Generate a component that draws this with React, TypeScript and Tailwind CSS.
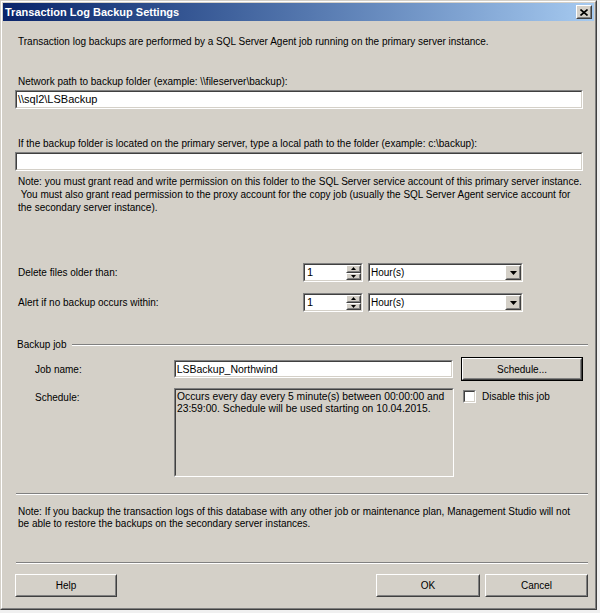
import React from "react";

const face = "bg-[#d4d0c8]";

function Sunken({ className = "", inner = "bg-white", children }: { className?: string; inner?: string; children?: React.ReactNode }) {
  return (
    <div className={`border border-t-[#808080] border-l-[#808080] border-b-white border-r-white ${className}`}>
      <div className={`h-full border border-t-[#404040] border-l-[#404040] border-b-[#d4d0c8] border-r-[#d4d0c8] ${inner}`}>
        {children}
      </div>
    </div>
  );
}

function Raised({ className = "", children }: { className?: string; children?: React.ReactNode }) {
  return (
    <div className={`border border-t-white border-l-white border-b-[#404040] border-r-[#404040] ${face} ${className}`}>
      <div className="h-full border border-t-[#d4d0c8] border-l-[#d4d0c8] border-b-[#808080] border-r-[#808080] flex items-center justify-center">
        {children}
      </div>
    </div>
  );
}

function Button({ label, width, isDefault = false }: { label: string; width: string; isDefault?: boolean }) {
  if (isDefault) {
    return (
      <div className={`border border-black ${width} h-full`}>
        <Raised className="h-full">{label}</Raised>
      </div>
    );
  }
  return <Raised className={`${width} h-full`}>{label}</Raised>;
}

function Triangle({ dir, size = 7 }: { dir: "up" | "down"; size?: number }) {
  const h = Math.ceil(size / 2);
  return (
    <svg width={size} height={h} viewBox={`0 0 ${size} ${h}`}>
      {dir === "down" ? (
        <polygon points={`0,0 ${size},0 ${size / 2},${h}`} fill="black" />
      ) : (
        <polygon points={`0,${h} ${size},${h} ${size / 2},0`} fill="black" />
      )}
    </svg>
  );
}

function Spin() {
  return (
    <Sunken className="w-[60px] h-[19px]">
      <div className="flex h-full">
        <span className="flex-1 pl-[2px] leading-[15px] text-[11px]">1</span>
        <div className="flex flex-col w-[15px] h-full">
          <Raised className="h-1/2">
            <Triangle dir="up" size={5} />
          </Raised>
          <Raised className="h-1/2">
            <Triangle dir="down" size={5} />
          </Raised>
        </div>
      </div>
    </Sunken>
  );
}

function Combo({ value }: { value: string }) {
  return (
    <Sunken className="w-[155px] h-[19px]">
      <div className="flex h-full">
        <span className="flex-1 pl-[1px] leading-[15px]">{value}</span>
        <Raised className="w-[16px] h-full">
          <Triangle dir="down" size={7} />
        </Raised>
      </div>
    </Sunken>
  );
}

function Etched({ className = "" }: { className?: string }) {
  return (
    <div className={`flex flex-col ${className}`}>
      <div className="h-px bg-[#808080]" />
      <div className="h-px bg-white" />
    </div>
  );
}

export default function App() {
  return (
    <div className="w-[600px] h-[613px] bg-[#f0f0f0] overflow-hidden [font-family:'Liberation_Sans',Arial,sans-serif] text-[10px] text-black">
      <div className="w-[597px] h-[610px] border border-t-[#d4d0c8] border-l-[#d4d0c8] border-b-[#404040] border-r-[#404040]">
        <div className={`h-full border border-t-white border-l-white border-b-[#808080] border-r-[#808080] ${face} p-px`}>
          {/* title bar */}
          <div className="h-[18px] flex items-center justify-between bg-gradient-to-r from-[#0a246a] to-[#a6caf0] pl-[2px] pr-[2px]">
            <span className="text-white font-bold text-[11px]">Transaction Log Backup Settings</span>
            <Raised className="w-[16px] h-[14px]">
              <svg width="8" height="7" viewBox="0 0 8 7">
                <path d="M0.5 0.5 L7.5 6.5 M7.5 0.5 L0.5 6.5" stroke="black" strokeWidth="1.6" />
              </svg>
            </Raised>
          </div>

          <div className="flex flex-col pl-[12px] pr-[11px] leading-[13px] whitespace-nowrap">
            <p className="mt-[14px] pl-[3px]">
              Transaction log backups are performed by a SQL Server Agent job running on the primary server instance.
            </p>

            <p className="mt-[27px] pl-[3px]">Network path to backup folder (example: \\fileserver\backup):</p>
            <Sunken className="mt-[2px] h-[19px]">
              <span className="block pl-[1px] leading-[15px] text-[11px]">\\sql2\LSBackup</span>
            </Sunken>

            <p className="mt-[28px] pl-[3px]">
              If the backup folder is located on the primary server, type a local path to the folder (example: c:\backup):
            </p>
            <Sunken className="mt-[2px] h-[19px]" />

            <p className="mt-[4px] pl-[3px]">
              Note: you must grant read and write permission on this folder to the SQL Server service account of this primary server instance.
              <br />
              &nbsp;You must also grant read permission to the proxy account for the copy job (usually the SQL Server Agent service account for
              <br />
              the secondary server instance).
            </p>

            <div className="mt-[49px] flex items-center h-[19px]">
              <span className="w-[288px] pl-[3px]">Delete files older than:</span>
              <Spin />
              <div className="ml-[5px]">
                <Combo value="Hour(s)" />
              </div>
            </div>

            <div className="mt-[11px] flex items-center h-[19px]">
              <span className="w-[288px] pl-[3px]">Alert if no backup occurs within:</span>
              <Spin />
              <div className="ml-[5px]">
                <Combo value="Hour(s)" />
              </div>
            </div>

            <div className="mt-[26px] flex items-center -mr-[5px] h-[13px]">
              <span className="pl-[2px]">Backup job</span>
              <Etched className="flex-1 ml-[6px]" />
            </div>

            <div className="mt-[6px] flex items-center h-[24px]">
              <span className="w-[159px] pl-[20px]">Job name:</span>
              <Sunken className="w-[280px] h-[18px]">
                <span className="block pl-[1px] leading-[14px] text-[10.5px]">LSBackup_Northwind</span>
              </Sunken>
              <div className="ml-[8px] h-full">
                <Button label="Schedule..." width="w-[122px]" isDefault />
              </div>
            </div>

            <div className="mt-[7px] flex items-start">
              <span className="w-[159px] pl-[20px] mt-[3px]">Schedule:</span>
              <Sunken className="w-[280px] h-[89px]" inner={face}>
                <p className="pl-[1px] pt-[1px] text-[10.3px] leading-[12px]">
                  Occurs every day every 5 minute(s) between 00:00:00 and
                  <br />
                  23:59:00. Schedule will be used starting on 10.04.2015.
                </p>
              </Sunken>
              <div className="ml-[9px] mt-[2px] flex items-center">
                <Sunken className="w-[13px] h-[13px]" />
                <span className="ml-[6px]">Disable this job</span>
              </div>
            </div>

            <Etched className="mt-[16px] ml-[1px] -mr-[5px]" />

            <p className="mt-[11px] pl-[3px] leading-[12px]">
              Note: If you backup the transaction logs of this database with any other job or maintenance plan, Management Studio will not
              <br />
              be able to restore the backups on the secondary server instances.
            </p>

            <Etched className="mt-[32px] ml-[1px] -mr-[5px]" />

            <div className="mt-[10px] flex h-[23px] -mr-[5px]">
              <Button label="Help" width="w-[102px]" />
              <div className="flex-1" />
              <Button label="OK" width="w-[104px]" />
              <div className="ml-[5px] h-full">
                <Button label="Cancel" width="w-[103px]" />
              </div>
            </div>
          </div>
        </div>
      </div>
    </div>
  );
}
